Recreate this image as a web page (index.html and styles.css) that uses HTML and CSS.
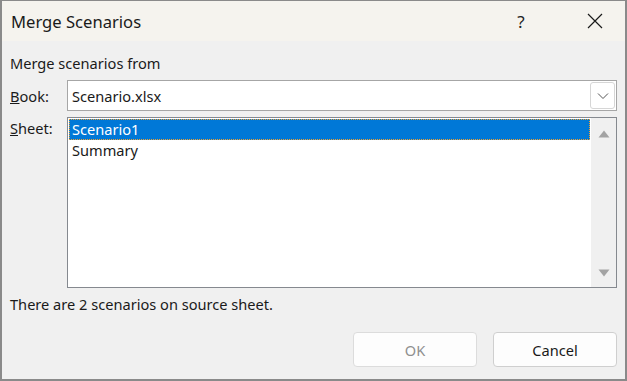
FILE: index.html
```html
<!DOCTYPE html>
<html>
  <head>
    <meta charset="UTF-8">
    <title>Merge Scenarios</title>
    <link rel="stylesheet" href="styles.css">
  </head>
  <body>
    <div class="window">
      <div class="titlebar">
        <span class="title">Merge Scenarios</span>
        <span class="help">?</span>
        <span class="close">
          <svg width="16" height="16" viewBox="0 0 16 16"><path d="M1 1 L15 15 M15 1 L1 15" stroke="#1a1a1a" stroke-width="1.2" fill="none"/></svg>
        </span>
      </div>
      <div class="content">
        <div class="caption">Merge scenarios from</div>
        <div class="row book-row">
          <span class="label"><u>B</u>ook:</span>
          <div class="combo">
            <span class="combo-text">Scenario.xlsx</span>
            <span class="combo-btn">
              <svg width="12" height="8" viewBox="0 0 12 8"><path d="M1 1.5 L6 6.5 L11 1.5" stroke="#555" stroke-width="1" fill="none"/></svg>
            </span>
          </div>
        </div>
        <div class="row sheet-row">
          <span class="label"><u>S</u>heet:</span>
          <div class="listbox">
            <div class="items">
              <div class="item selected">Scenario1</div>
              <div class="item">Summary</div>
            </div>
            <div class="scrollbar">
              <svg width="12" height="8" viewBox="0 0 12 8"><path d="M6 0.5 L11.5 7.5 L0.5 7.5 Z" fill="#a3a3a3"/></svg>
              <svg width="12" height="8" viewBox="0 0 12 8"><path d="M0.5 0.5 L11.5 0.5 L6 7.5 Z" fill="#a3a3a3"/></svg>
            </div>
          </div>
        </div>
        <div class="status">There are 2 scenarios on source sheet.</div>
        <div class="buttons">
          <button type="button" class="btn" disabled>OK</button>
          <button type="button" class="btn">Cancel</button>
        </div>
      </div>
    </div>
  </body>
</html>
```

FILE: styles.css
```css
body {
  margin: 0;
  background-color: #f0f0f0;
  font-family: 'Noto Sans', 'Open Sans', sans-serif;
  font-size: 14.6px;
  color: #1a1a1a;
}
.window {
  width: 627px;
  height: 381px;
  box-sizing: border-box;
  border: 1px solid #8a8a8a;
  border-width: 1px 2px 2px 2px;
  background-color: #f0f0f0;
  display: flex;
  flex-direction: column;
}
.titlebar {
  height: 40px;
  background-color: #f5f3ee;
  display: flex;
  align-items: center;
  padding-left: 9px;
}
.title {
  font-size: 16.6px;
  flex: 1;
}
.help {
  font-size: 17px;
  width: 30px;
  margin-right: 49px;
  text-align: center;
  color: #222;
}
.close {
  width: 20px;
  margin-right: 20px;
  display: flex;
  justify-content: center;
}
.content {
  flex: 1;
  padding: 12px 8px 12px 8px;
  display: flex;
  flex-direction: column;
}
.caption {
  line-height: 20px;
  margin-bottom: 7px;
}
.row {
  display: flex;
}
.label {
  width: 57px;
  flex-shrink: 0;
}
.book-row {
  align-items: center;
  height: 31px;
}
.combo {
  flex: 1;
  height: 31px;
  box-sizing: border-box;
  border: 1px solid #a6a6a6;
  background-color: #fff;
  display: flex;
  align-items: center;
  padding: 0 1px 0 4px;
}
.combo-text {
  flex: 1;
}
.combo-btn {
  width: 25px;
  height: 27px;
  box-sizing: border-box;
  border: 1px solid #d6d6d6;
  border-radius: 3px;
  display: flex;
  align-items: center;
  justify-content: center;
}
.sheet-row {
  margin-top: 6px;
  height: 171px;
}
.sheet-row .label {
  padding-top: 1px;
}
.listbox {
  flex: 1;
  box-sizing: border-box;
  border: 1px solid #85898f;
  background-color: #fff;
  display: flex;
}
.items {
  flex: 1;
  padding: 1px 1px 0 1px;
}
.item {
  height: 21px;
  line-height: 21px;
  padding-left: 3px;
}
.item.selected {
  background-color: #0078d7;
  color: #fff;
  outline: 1px dotted #f0a030;
  outline-offset: -1px;
}
.scrollbar {
  width: 25px;
  background-color: #f0f0f0;
  display: flex;
  flex-direction: column;
  justify-content: space-between;
  align-items: center;
  padding: 12px 0 10px 0;
}
.status {
  margin-top: 6px;
  line-height: 20px;
}
.buttons {
  margin-top: auto;
  display: flex;
  justify-content: flex-end;
  gap: 16px;
  padding-right: 0;
}
.btn {
  width: 124px;
  height: 35px;
  box-sizing: border-box;
  border: 1px solid #cfcfcf;
  border-radius: 4px;
  background-color: #fdfdfd;
  font-family: 'Noto Sans', 'Open Sans', sans-serif;
  font-size: 14.6px;
  color: #1a1a1a;
}
.btn:disabled {
  color: #8f8f8f;
  border-color: #dcdcdc;
}
```
